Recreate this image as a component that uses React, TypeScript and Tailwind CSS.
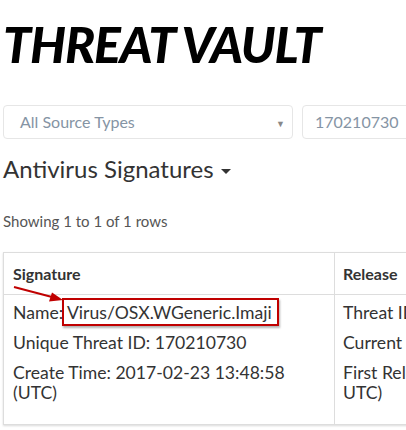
import React from "react";

export default function App() {
  return (
    <div className="w-[406px] h-[430px] overflow-hidden bg-white relative" style={{ fontFamily: "Lato, 'Open Sans', sans-serif" }}>
      <div className="w-[700px]">
        <h1 className="pl-[3px] pt-[19px] text-[50px] leading-none font-black italic text-black tracking-[-1.1px]">THREAT VAULT</h1>

        <div className="flex gap-[9px] pl-[3px] mt-[36px]">
          <div className="relative w-[290px] h-[34px] border border-[#e6e6e6] rounded-[4px] flex items-center pl-[16px] text-[16px] text-[#8594a4]">
            All Source Types
            <span className="absolute right-[7px] top-[11px] text-[9px] text-[#888]">▼</span>
          </div>
          <div className="w-[240px] h-[34px] border border-[#e6e6e6] rounded-[4px] flex items-center pl-[12px] text-[16px] text-[#8594a4]">
            170210730
          </div>
        </div>

        <div className="pl-[3px] mt-[15px] flex items-center text-[24px] leading-[30px] text-[#333]">
          Antivirus Signatures
          <span className="ml-[7px] mt-[4px] w-0 h-0 border-l-[5px] border-r-[5px] border-t-[5px] border-l-transparent border-r-transparent border-t-[#333]" />
        </div>

        <div className="pl-[3px] mt-[27px] text-[15px] leading-[20px] text-[#555]">Showing 1 to 1 of 1 rows</div>

        <div className="w-[600px] ml-[3px] mt-[21px] border border-[#ddd] shadow-[0_1px_2px_rgba(0,0,0,0.15)] text-[17.6px] text-[#333]">
          <div className="flex h-[42px] border-b border-[#ddd] font-bold text-[16px]">
            <div className="w-[331px] shrink-0 border-r border-[#ddd] pl-[9px] flex items-center">Signature</div>
            <div className="pl-[8px] flex items-center">Release</div>
          </div>
          <div className="flex leading-[20px]">
            <div className="w-[331px] shrink-0 border-r border-[#ddd] pl-[9px] pt-[8px] pb-[21px] flex flex-col gap-[10px]">
              <div className="whitespace-nowrap">
                Name:{" "}
                <span className="relative">
                  Virus/OSX.WGeneric.Imaji
                  <span className="absolute left-[-5px] right-[-7px] top-[-4px] bottom-[-3px] border-[2.5px] border-[#c00000] shadow-[1px_2px_2px_rgba(0,0,0,0.3)]" />
                </span>
              </div>
              <div>Unique Threat ID: 170210730</div>
              <div>Create Time: 2017-02-23 13:48:58<br />(UTC)</div>
            </div>
            <div className="pl-[8px] pt-[8px] flex flex-col gap-[10px] whitespace-nowrap">
              <div>Threat ID: 170210730</div>
              <div>Current Release: 2017-02-24</div>
              <div>First Release: 2017-02-24 (<br />UTC)</div>
            </div>
          </div>
        </div>
      </div>

      <svg className="absolute left-0 top-0" width="406" height="430" viewBox="0 0 406 430">
        <line x1="14" y1="287" x2="52" y2="297" stroke="#c00000" strokeWidth="2" />
        <polygon points="63,300 49,301.5 52,292.5" fill="#c00000" />
      </svg>
    </div>
  );
}
